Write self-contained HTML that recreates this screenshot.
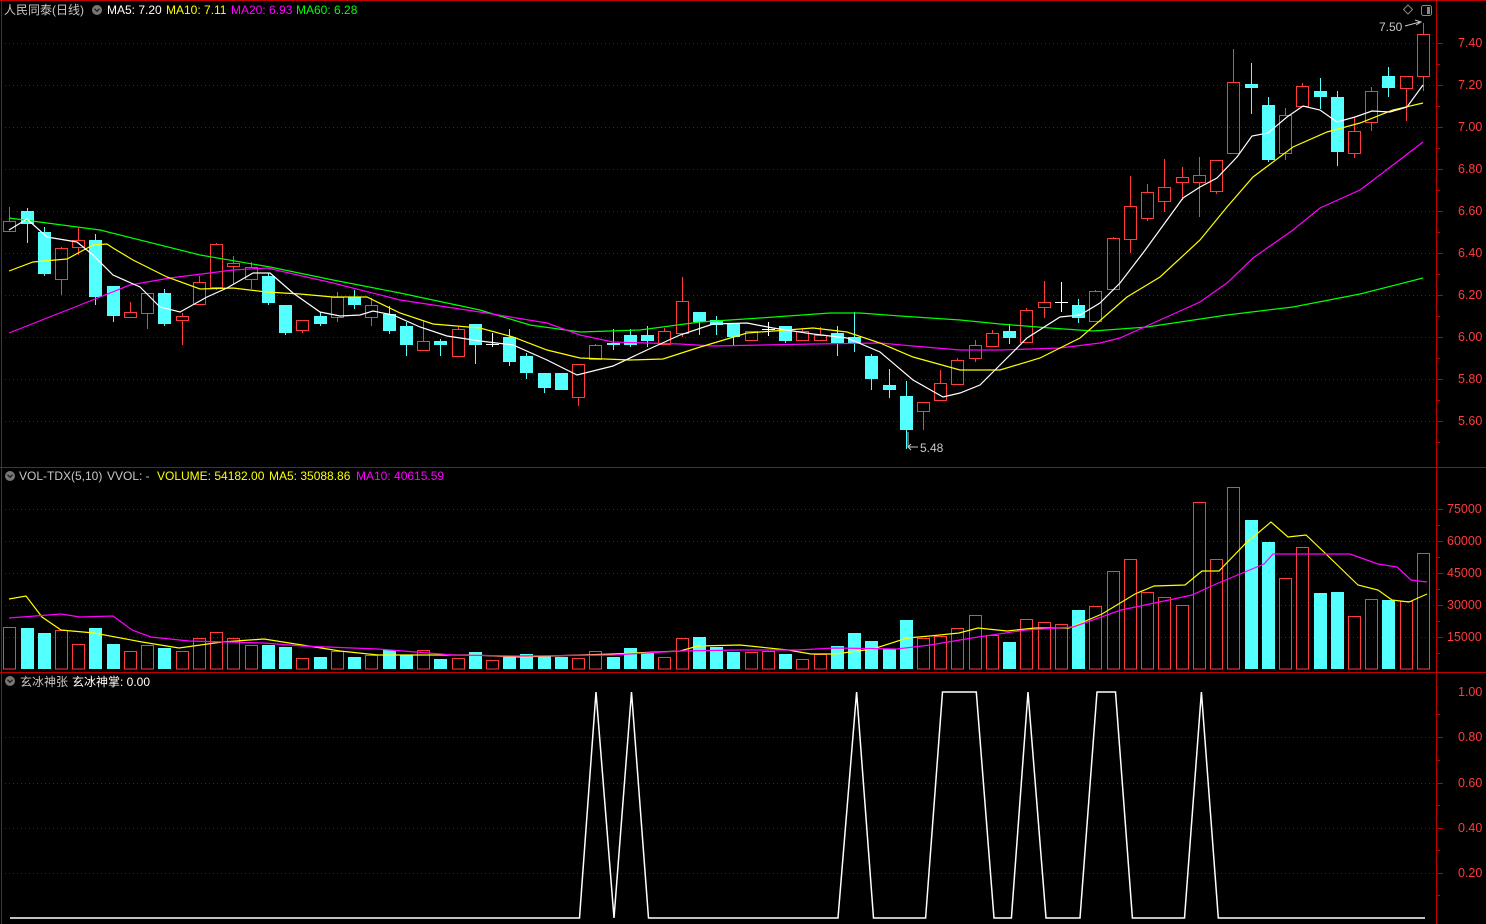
<!DOCTYPE html>
<html><head><meta charset="utf-8"><style>
html,body{margin:0;padding:0;background:#000;width:1486px;height:924px;overflow:hidden}
svg{display:block}
text{font-family:"Liberation Sans","Noto Sans CJK SC",sans-serif;font-size:12px}
.ax{fill:#ff3c3c;font-size:12.5px}
</style></head><body>
<svg id="s" width="1486" height="924" xmlns="http://www.w3.org/2000/svg">
<rect width="1486" height="924" fill="#000"/>
<g id="grid"></g>
<!-- borders -->
<line x1="0" y1="0.5" x2="1486" y2="0.5" stroke="#c00000"/>
<line x1="1.5" y1="0" x2="1.5" y2="924" stroke="#c00000"/>
<line x1="0" y1="467.5" x2="1486" y2="467.5" stroke="#c00000"/>
<line x1="0" y1="672.5" x2="1486" y2="672.5" stroke="#c00000"/>
<line x1="1436.5" y1="0" x2="1436.5" y2="924" stroke="#c00000"/>
<g id="ticks"></g>
<!-- axis labels -->
<g class="ax">
<text class="ax" x="1458" y="47">7.40</text>
<text class="ax" x="1458" y="89">7.20</text>
<text class="ax" x="1458" y="131">7.00</text>
<text class="ax" x="1458" y="173">6.80</text>
<text class="ax" x="1458" y="215">6.60</text>
<text class="ax" x="1458" y="257">6.40</text>
<text class="ax" x="1458" y="299">6.20</text>
<text class="ax" x="1458" y="341">6.00</text>
<text class="ax" x="1458" y="383">5.80</text>
<text class="ax" x="1458" y="425">5.60</text>
<text class="ax" x="1447" y="513">75000</text>
<text class="ax" x="1447" y="545">60000</text>
<text class="ax" x="1447" y="577">45000</text>
<text class="ax" x="1447" y="609">30000</text>
<text class="ax" x="1447" y="641">15000</text>
<text class="ax" x="1458" y="696">1.00</text>
<text class="ax" x="1458" y="741">0.80</text>
<text class="ax" x="1458" y="787">0.60</text>
<text class="ax" x="1458" y="832">0.40</text>
<text class="ax" x="1458" y="877">0.20</text>
</g>
<g id="vol"></g>
<g id="cand"></g>
<g id="lines" fill="none" stroke-width="1.2"></g>
<!-- indicator -->
<polyline fill="none" stroke="#fff" stroke-width="1.5" points="10,918 579.5,918 596,692 614,918 631.5,692 648.5,918 838,918 856.6,692 873.5,918 925.6,918 942.5,692 976.3,692 994,918 1011.4,918 1028,692 1046,918 1080,918 1097,692 1115.5,692 1132.4,918 1184.5,918 1201.4,692 1218.3,918 1425,918"/>
<!-- headers -->
<circle cx="97" cy="10" r="5" fill="#777"/><path d="M94.5 8.8 L97 11.3 L99.5 8.8" stroke="#222" stroke-width="1.4" fill="none"/>
<text x="4" y="14" fill="#c8c8c8">人民同泰(日线)</text>
<text x="107" y="14" fill="#fff">MA5: 7.20</text>
<text x="166" y="14" fill="#ffff00">MA10: 7.11</text>
<text x="231" y="14" fill="#ff00ff">MA20: 6.93</text>
<text x="296" y="14" fill="#00ff00">MA60: 6.28</text>
<circle cx="10" cy="476" r="5" fill="#777"/><path d="M7.5 474.8 L10 477.3 L12.5 474.8" stroke="#222" stroke-width="1.4" fill="none"/>
<text x="19" y="480" fill="#c8c8c8">VOL-TDX(5,10)</text>
<text x="107" y="480" fill="#c8c8c8">VVOL: -</text>
<text x="157" y="480" fill="#ffff00">VOLUME: 54182.00</text>
<text x="269" y="480" fill="#ffff00">MA5: 35088.86</text>
<text x="356" y="480" fill="#ff00ff">MA10: 40615.59</text>
<circle cx="10" cy="681" r="5" fill="#777"/><path d="M7.5 679.8 L10 682.3 L12.5 679.8" stroke="#222" stroke-width="1.4" fill="none"/>
<text x="20" y="686" fill="#c8c8c8">玄冰神张</text>
<text x="72" y="686" fill="#fff">玄冰神掌: 0.00</text>
<!-- markers -->
<text x="1379" y="31" fill="#c8c8c8">7.50</text>
<path d="M1405 26 L1420 22 M1415 20 L1421 22 L1416 25" stroke="#c8c8c8" fill="none"/>
<line x1="908" y1="432" x2="908" y2="447" stroke="#c8c8c8"/>
<path d="M908 447 L918 447 M911 444 L908 447 L911 450" stroke="#c8c8c8" fill="none"/>
<text x="920" y="452" fill="#c8c8c8">5.48</text>
<path d="M1408 5 L1412.5 9.5 L1408 14 L1403.5 9.5 Z" stroke="#888" fill="none"/>
<rect x="1421.5" y="5.5" width="10" height="10" rx="2" stroke="#888" fill="none"/>
<rect x="1427" y="7" width="3" height="7" fill="#888"/>
</svg>
<script>
var NS="http://www.w3.org/2000/svg",s=document.getElementById('s');
function el(p,t,a){var e=document.createElementNS(NS,t);for(var k in a)e.setAttribute(k,a[k]);document.getElementById(p).appendChild(e);return e;}
// grid
[43,85,127,169,211,253,295,337,379,421,509,541,573,605,637,737,783,828,873].forEach(function(y){
 el('grid','line',{x1:5,y1:y+.5,x2:1436,y2:y+.5,stroke:'#a00000','stroke-dasharray':'1,3'});
 el('ticks','line',{x1:1436,y1:y+.5,x2:1443,y2:y+.5,stroke:'#c00000'});
});
[64,106,148,190,232,274,316,358,400,442,525,557,589,621,653,714,760,805,850,895].forEach(function(y){
 el('ticks','line',{x1:1436,y1:y+.5,x2:1440,y2:y+.5,stroke:'#c00000'});
});
var C=[["r",221,231,207,232],["c",211,224,208,243],["c",232,274,227,276],["r",248,279,247,295],["r",240,247,228,255],["c",240,297,234,305],["c",286,316,286,322],["r",312,317,302,317],["r",293,313,293,329],["c",293,324,289,326],["r",316,320,313,345],["r",282,304,276,304],["r",244,287,243,290],["r",263,266,256,284],["r",267,279,262,289],["c",276,303,273,305],["c",305,333,305,335],["r",320,330,320,333],["c",316,324,312,326],["r",297,317,292,322],["c",297,305,290,309],["r",305,317,298,326],["c",314,331,306,334],["c",326,345,322,356],["r",341,350,321,350],["c",341,345,339,356],["r",329,356,327,356],["c",324,345,324,364],["w",344,345,333,347],["c",337,362,329,366],["c",356,373,353,379],["c",373,388,373,393],["c",373,390,373,390],["r",364,397,364,406],["r",345,359,344,359],["c",343,345,329,350],["c",335,345,329,347],["c",335,341,326,347],["r",331,344,328,344],["r",301,333,277,337],["c",312,322,312,335],["c",320,325,316,335],["c",323,337,323,345],["r",331,340,331,340],["w",329,330,322,336],["c",326,341,326,343],["r",331,340,329,341],["r",335,340,327,340],["c",333,343,326,356],["c",337,343,312,352],["c",356,379,354,390],["c",385,390,369,398],["c",396,430,381,449],["r",402,411,402,430],["r",383,400,370,400],["r",360,384,358,384],["r",345,358,340,362],["r",333,346,330,346],["c",331,338,324,344],["r",310,342,308,342],["r",302,307,281,318],["w",302,303,282,312],["c",305,318,299,323],["r",291,321,290,321],["r",238,289,237,289],["r",206,239,176,253],["r",192,218,184,221],["r",187,201,159,212],["r",177,182,167,200],["r",175,182,157,217],["r",160,191,160,194],["r",82,153,49,153],["c",84,88,63,114],["c",105,160,97,162],["r",115,153,108,160],["r",86,106,83,106],["c",91,97,78,109],["c",97,152,91,166],["r",131,153,117,158],["r",91,122,87,131],["c",76,88,67,97],["r",76,88,76,121],["r",34,76,23,91]];
var V=["r627","c628","c633","r630","r644","c628","c644","r651","r645","c648","r651","r638","r632","r638","r645","c645","c647","r658","c657","r651","c657","r655","c650","c655","r650","c659","r658","c652","r660","c657","c654","c656","c657","r658","r651","c657","c648","c652","r657","r638","c637","c647","c652","r652","r651","c654","r659","r654","c646","c633","c641","c649","c620","r638","r636","r628","r615","r635","c642","r619","r622","r624","c610","r606","r571","r559","r592","r597","r605","r502","r559","r487","c520","c542","r578","r547","c593","c592","r616","r599","c600","r601","r553"];
var RED="#ff3c3c",CY="#54ffff";
function X(i){return Math.round(9.3+i*17.24);}
V.forEach(function(v,i){var x=X(i),t=+v.slice(1),c=v[0];
 if(c=='c')el('vol','rect',{x:x-6,y:t,width:13,height:669-t,fill:CY});
 else el('vol','rect',{x:x-5.5,y:t+.5,width:12,height:668.5-t,fill:'none',stroke:RED});
});
C.forEach(function(d,i){var x=X(i),c=d[0],bt=d[1],bb=d[2],wt=d[3],wb=d[4];
 if(c=='c'){el('cand','line',{x1:x+.5,y1:wt,x2:x+.5,y2:wb,stroke:CY});
  el('cand','rect',{x:x-6,y:bt,width:13,height:Math.max(1,bb-bt),fill:CY});}
 else if(c=='w'){el('cand','line',{x1:x+.5,y1:wt,x2:x+.5,y2:wb,stroke:'#fff'});
  el('cand','line',{x1:x-6,y1:bt+.5,x2:x+7,y2:bt+.5,stroke:'#fff'});}
 else{ if(wt<bt)el('cand','line',{x1:x+.5,y1:wt,x2:x+.5,y2:bt,stroke:RED});
  if(wb>bb)el('cand','line',{x1:x+.5,y1:bb,x2:x+.5,y2:wb,stroke:RED});
  el('cand','rect',{x:x-5.5,y:bt+.5,width:12,height:Math.max(1,bb-bt),fill:'none',stroke:RED});}
});
var L={
'#00ff00':"9,218 100,230 200,255 270,267 333,280 400,293 480,310 530,325 580,332 640,330 700,322 760,318 830,313 860,313 900,316 960,320 1000,324 1050,328 1093,331 1147,327 1227,315 1293,307 1360,294 1423,278",
'#ff00ff':"9,333 80,305 130,285 170,278 233,270 267,268 333,283 400,300 480,312 547,323 580,335 613,342 680,344 713,346 813,344 880,343 913,346 960,350 1000,350 1060,348 1100,343 1120,338 1160,320 1200,302 1227,283 1253,258 1293,230 1320,208 1360,190 1393,165 1423,142",
'#ffff00':"9,271 33,262 67,259 93,245 107,244 113,248 133,260 167,277 200,289 233,288 267,292 300,294 333,297 367,297 400,313 433,324 480,328 513,337 547,350 580,358 630,360 663,359 697,348 747,333 813,328 847,332 880,343 913,357 960,370 1000,370 1040,358 1080,338 1127,297 1160,277 1200,240 1227,207 1253,177 1293,147 1327,132 1360,123 1393,110 1423,103",
'#ffffff':"9,230 27,219 47,237 77,242 93,255 113,275 140,287 160,307 180,312 207,297 227,288 253,273 270,273 293,293 320,312 340,316 360,315 373,311 393,315 420,327 447,336 480,341 513,345 547,360 577,375 613,366 647,350 680,335 713,324 747,323 773,328 813,334 847,338 880,352 913,380 943,397 960,393 980,385 1000,365 1027,338 1060,317 1080,315 1100,303 1120,283 1143,253 1167,220 1183,198 1200,187 1217,178 1237,157 1252,136 1268,133 1287,117 1303,106 1320,110 1337,122 1355,117 1372,111 1390,112 1407,107 1423,85"};
for(var k in L)el('lines','polyline',{points:L[k],stroke:k});
el('lines','polyline',{stroke:'#ffff00',points:"9,599 26,596 42,617 61,630 94,633 142,642 179,648 222,642 264,639 302,645 340,651 378,655 472,655 519,657 613,654 680,651 698,646 740,645 788,650 811,654 835,654 873,649 907,638 930,636 959,633 978,628 1007,631 1035,628 1069,628 1102,614 1135,594 1154,586 1185,585 1202,571 1219,571 1245,544 1271,522 1288,537 1306,535 1326,554 1358,585 1378,590 1392,600 1409,602 1427,594"});
el('lines','polyline',{stroke:'#ff00ff',points:"9,618 61,614 80,617 113,616 132,630 151,637 189,641 264,643 302,646 378,649 453,655 519,656 613,655 680,651 740,650 797,650 835,648 897,649 930,645 978,637 1026,630 1073,627 1121,610 1169,600 1192,595 1216,584 1264,564 1273,554 1311,554 1350,554 1378,564 1397,567 1411,580 1427,582"});
</script>
</body></html>
